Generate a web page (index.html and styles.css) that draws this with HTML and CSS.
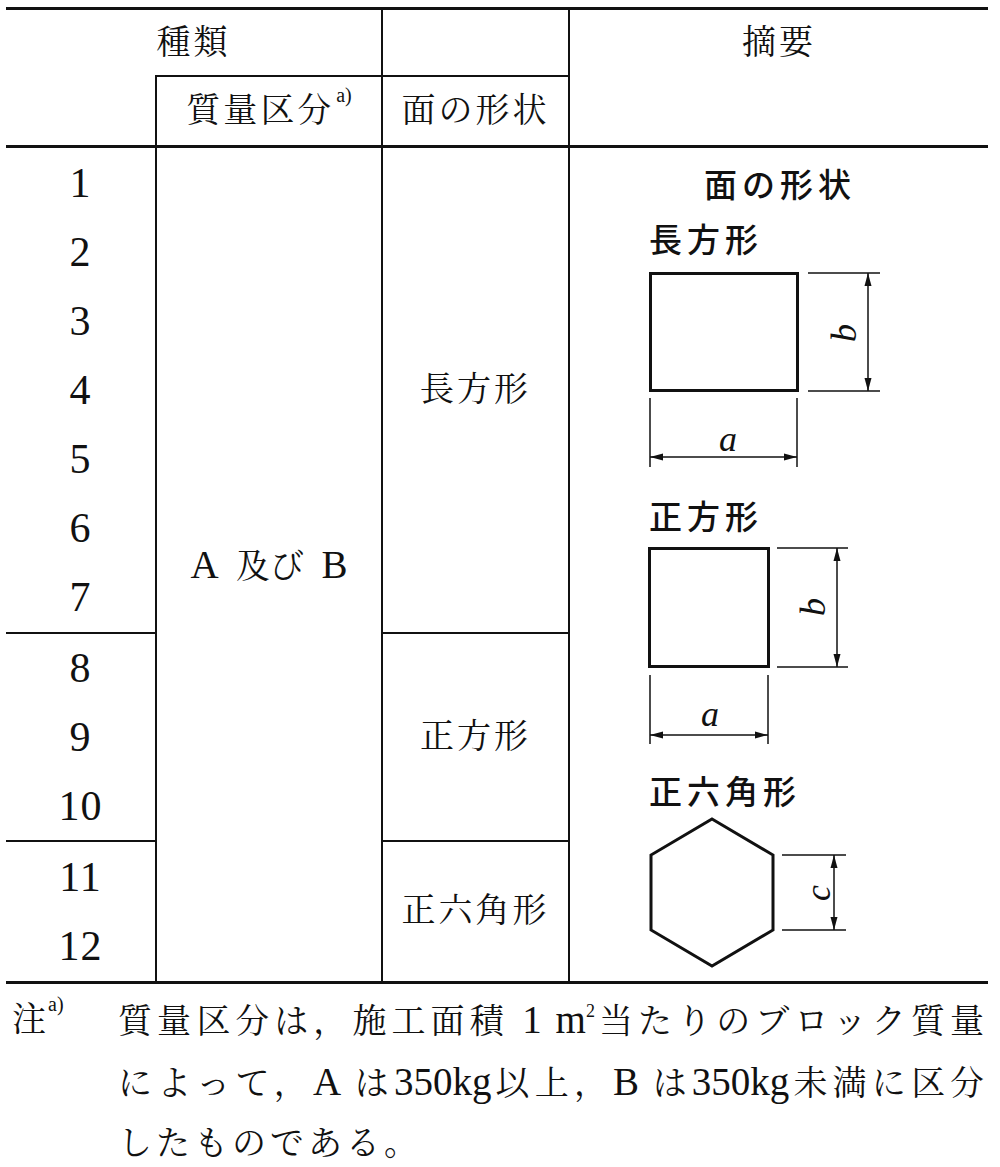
FILE: index.html
```html
<!DOCTYPE html>
<html lang="ja">
<head>
<meta charset="utf-8">
<title>種類</title>
<link rel="stylesheet" href="styles.css">
</head>
<body>
<div class="page">
  <div class="tbl">
    <div class="c h-kind">種類</div>
    <div class="c h-blank"></div>
    <div class="c h-summary">摘要</div>
    <div class="c h-mass"><span>質量区分<sup class="note">a)</sup></span></div>
    <div class="c h-face">面の形状</div>
    <div class="c h-sumblank"></div>
    <div class="rule"></div>

    <div class="grp grp-a">
      <div class="num">1</div><div class="num">2</div><div class="num">3</div><div class="num">4</div>
      <div class="num">5</div><div class="num">6</div><div class="num">7</div>
    </div>
    <div class="grp grp-b">
      <div class="num">8</div><div class="num">9</div><div class="num">10</div>
    </div>
    <div class="grp grp-c">
      <div class="num">11</div><div class="num">12</div>
    </div>

    <div class="c ab"><span><span class="lat">A</span> 及び <span class="lat">B</span></span></div>
    <div class="c shape s-rect">長方形</div>
    <div class="c shape s-sq">正方形</div>
    <div class="c shape s-hex">正六角形</div>

    <div class="c summary">
      <svg class="fig" viewBox="570 148 418 833" xmlns="http://www.w3.org/2000/svg">
        <text class="lbl" x="780" y="197" text-anchor="middle">面の形状</text>

        <text class="lbl" x="649" y="252">長方形</text>
        <rect class="edge" x="650.5" y="273.5" width="147" height="117"/>
        <line class="ext" x1="808" y1="273" x2="880" y2="273"/>
        <line class="ext" x1="808" y1="391" x2="880" y2="391"/>
        <line class="ext" x1="868" y1="273" x2="868" y2="391"/>
        <line class="ext" x1="650" y1="398" x2="650" y2="467"/>
        <line class="ext" x1="797" y1="398" x2="797" y2="467"/>
        <line class="ext" x1="650" y1="457" x2="797" y2="457"/>
        <polygon class="head" points="868,273 864.5,286 871.5,286"/>
        <polygon class="head" points="868,391 864.5,378 871.5,378"/>
        <polygon class="head" points="650,457 663,453.5 663,460.5"/>
        <polygon class="head" points="797,457 784,453.5 784,460.5"/>
        <text class="dim" transform="translate(856 333) rotate(-90)" text-anchor="middle">b</text>
        <text class="dim" x="728" y="451" text-anchor="middle">a</text>

        <text class="lbl" x="649" y="529">正方形</text>
        <rect class="edge" x="649.5" y="548.5" width="119" height="118"/>
        <line class="ext" x1="777" y1="548" x2="848" y2="548"/>
        <line class="ext" x1="777" y1="667" x2="848" y2="667"/>
        <line class="ext" x1="837" y1="548" x2="837" y2="667"/>
        <line class="ext" x1="650" y1="675" x2="650" y2="744"/>
        <line class="ext" x1="768" y1="675" x2="768" y2="744"/>
        <line class="ext" x1="650" y1="735" x2="768" y2="735"/>
        <polygon class="head" points="837,548 833.5,561 840.5,561"/>
        <polygon class="head" points="837,667 833.5,654 840.5,654"/>
        <polygon class="head" points="650,735 663,731.5 663,738.5"/>
        <polygon class="head" points="768,735 755,731.5 755,738.5"/>
        <text class="dim" transform="translate(825 607) rotate(-90)" text-anchor="middle">b</text>
        <text class="dim" x="710" y="726" text-anchor="middle">a</text>

        <text class="lbl" x="649" y="804">正六角形</text>
        <polygon class="edge" points="712,819 773,855 773,930 712,966 651,930 651,855"/>
        <line class="ext" x1="782" y1="855" x2="846" y2="855"/>
        <line class="ext" x1="782" y1="930" x2="846" y2="930"/>
        <line class="ext" x1="834" y1="855" x2="834" y2="930"/>
        <polygon class="head" points="834,855 830.5,868 837.5,868"/>
        <polygon class="head" points="834,930 830.5,917 837.5,917"/>
        <text class="dim" transform="translate(830 893) rotate(-90)" text-anchor="middle">c</text>
      </svg>
    </div>
  </div>

  <div class="foot">
    <div class="foot-label">注<sup class="note">a)</sup></div>
    <div class="foot-text">
      <span class="fl">質量区分は，施工面積 <span class="lat">1 m<sup class="sq">2</sup></span>当たりのブロック質量</span>
      <span class="fl">によって，<span class="lat">A</span> は<span class="lat">350kg</span>以上，<span class="lat">B</span> は<span class="lat">350kg</span>未満に区分</span>
      <span class="fl last">したものである。</span>
    </div>
  </div>
</div>
</body>
</html>
```

FILE: styles.css
```css
body {
  margin: 0;
  background: #fff;
  color: #111;
  font-family: "Liberation Serif", "Noto Serif CJK JP", "Noto Sans CJK JP", serif;
}

.page {
  padding: 7px 0 0 6px;
  width: 982px;
}

.tbl {
  display: grid;
  grid-template-columns: 149px 226px 187px 420px;
  grid-template-rows: 65px 70px 3px repeat(12, 69.4px);
  border-top: 3px solid #111;
  border-bottom: 3px solid #111;
  font-size: 34px;
  line-height: 1;
}

.c {
  box-sizing: border-box;
  display: flex;
  align-items: center;
  justify-content: center;
}

.h-kind { grid-column: 1 / 3; grid-row: 1; letter-spacing: 3px; }
.h-blank { grid-column: 3; grid-row: 1; border-left: 2px solid #111; }
.h-summary { grid-column: 4; grid-row: 1; border-left: 2px solid #111; letter-spacing: 3px; }
.h-mass { grid-column: 2; grid-row: 2; border-top: 2px solid #111; border-left: 2px solid #111; letter-spacing: 3px; }
.h-face { grid-column: 3; grid-row: 2; border-top: 2px solid #111; border-left: 2px solid #111; letter-spacing: 3px; }
.h-sumblank { grid-column: 4; grid-row: 2; border-left: 2px solid #111; }

.note {
  font-size: 20px;
  line-height: 0;
  vertical-align: 20px;
  letter-spacing: 0;
  margin-left: 2px;
}

.rule { grid-column: 1 / -1; grid-row: 3; background: #111; }

.grp {
  grid-column: 1;
  box-sizing: border-box;
  display: grid;
  grid-auto-rows: 1fr;
}
.grp-a { grid-row: 4 / 11; border-bottom: 2px solid #111; }
.grp-b { grid-row: 11 / 14; border-bottom: 2px solid #111; }
.grp-c { grid-row: 14 / 16; }

.num {
  display: flex;
  align-items: center;
  justify-content: center;
  font-size: 42px;
  letter-spacing: 1px;
}

.lat { font-size: 39px; }

.ab { grid-column: 2; grid-row: 4 / 16; border-left: 2px solid #111; word-spacing: 9px; }

.shape { grid-column: 3; border-left: 2px solid #111; letter-spacing: 3px; }
.s-rect { grid-row: 4 / 11; border-bottom: 2px solid #111; }
.s-sq { grid-row: 11 / 14; border-bottom: 2px solid #111; }
.s-hex { grid-row: 14 / 16; }

.summary {
  grid-column: 4;
  grid-row: 4 / 16;
  border-left: 2px solid #111;
  align-items: flex-start;
  justify-content: flex-start;
  overflow: hidden;
}

.fig { display: block; width: 418px; height: 833px; flex: none; }
.fig .lbl {
  font-family: "Noto Sans CJK JP", "Noto Sans", sans-serif;
  font-size: 33px;
  font-weight: 500;
  letter-spacing: 5px;
  fill: #111;
}
.fig .dim {
  font-family: "Liberation Serif", serif;
  font-style: italic;
  font-size: 36px;
  fill: #111;
}
.fig .edge { fill: none; stroke: #111; stroke-width: 3; stroke-linejoin: miter; }
.fig .ext { stroke: #111; stroke-width: 1.5; }
.fig .head { fill: #111; }

.foot {
  display: flex;
  margin-top: 6px;
  font-size: 34px;
  line-height: 60px;
}
.foot-label {
  box-sizing: border-box;
  width: 112px;
  padding-left: 6px;
  flex: none;
}
.foot-text { width: 867px; }
.fl {
  display: block;
  text-align: justify;
  text-align-last: justify;
  letter-spacing: 1px;
}
.fl.last { text-align-last: left; letter-spacing: 4px; }
.fl .lat { letter-spacing: 0; }
.sq { font-size: 18px; line-height: 0; vertical-align: 16px; }
```
